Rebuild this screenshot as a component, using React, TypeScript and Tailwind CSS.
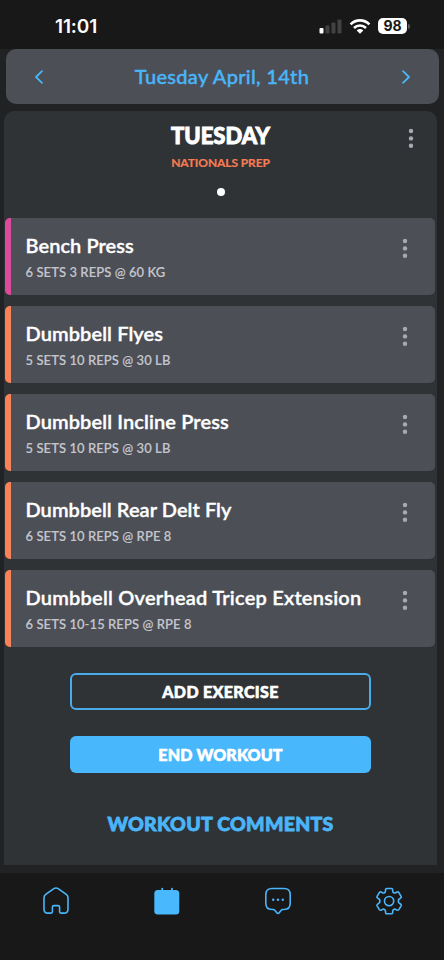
import type { ReactNode } from "react";

type Exercise = {
  name: string;
  detail: string;
  bar: string;
  spacing: string;
};

const exercises: Exercise[] = [
  { name: "Bench Press", detail: "6 SETS 3 REPS @ 60 KG", bar: "bg-[#dc4a9c]", spacing: "tracking-[0.06px]" },
  { name: "Dumbbell Flyes", detail: "5 SETS 10 REPS @ 30 LB", bar: "bg-[#f98359]", spacing: "tracking-[0.1px]" },
  { name: "Dumbbell Incline Press", detail: "5 SETS 10 REPS @ 30 LB", bar: "bg-[#f98359]", spacing: "tracking-[0.11px]" },
  { name: "Dumbbell Rear Delt Fly", detail: "6 SETS 10 REPS @ RPE 8", bar: "bg-[#f98359]", spacing: "tracking-[0.06px]" },
  { name: "Dumbbell Overhead Tricep Extension", detail: "6 SETS 10-15 REPS @ RPE 8", bar: "bg-[#f98359]", spacing: "tracking-[0.23px]" },
];

function Dots() {
  return (
    <button className="block" aria-label="More options">
      <svg width="20" height="21" viewBox="0 0 20 21" fill="#a8aab1">
        <circle cx="10" cy="3" r="2.2" />
        <circle cx="10" cy="10.4" r="2.2" />
        <circle cx="10" cy="17.8" r="2.2" />
      </svg>
    </button>
  );
}

function StatusBar() {
  return (
    <div className="flex h-[49px] items-start justify-between bg-[#181818] pl-[55px] pr-[34px] pt-[15px] font-['Inter',sans-serif] text-white">
      <span className="text-[19px] font-semibold leading-[24px] tracking-[-0.1px]">11:01</span>
      <div className="flex items-center pt-[3px]">
        <svg width="24" height="15" viewBox="0 0 24 15">
          <rect x="0.5" y="9" width="4" height="5.5" rx="1" fill="#fff" />
          <rect x="6.5" y="6.5" width="4" height="8" rx="1" fill="#424242" />
          <rect x="12.5" y="3.5" width="4" height="11" rx="1" fill="#424242" />
          <rect x="18.5" y="0.5" width="4" height="14" rx="1" fill="#424242" />
        </svg>
        <svg className="ml-[6px]" width="22" height="15" viewBox="0 0 22 15" fill="none" stroke="#fff" strokeWidth="2.6">
          <path d="M1.6 5.3a13.3 13.3 0 0 1 18.8 0" />
          <path d="M5 9a8.5 8.5 0 0 1 12 0" />
          <path d="M11 14.7l-3.3-3.3a4.7 4.7 0 0 1 6.6 0z" fill="#fff" stroke="none" />
        </svg>
        <div className="ml-[7px] flex h-4 w-[29px] items-center justify-center rounded-[5px] bg-white text-[14px] font-bold leading-none text-[#181818]">
          98
        </div>
        <span className="ml-px h-[5px] w-[2px] rounded-r-full bg-[#5a5a5a]" />
      </div>
    </div>
  );
}

function ExerciseCard({ exercise }: { exercise: Exercise }) {
  return (
    <div className="flex h-[77px] overflow-hidden rounded-[5px] bg-[#4c4f56]">
      <span className={`w-[6px] shrink-0 ${exercise.bar}`} />
      <div className="flex-1 whitespace-nowrap pl-[14.5px] pt-[15px]">
        <h3 className={`text-[20px] font-semibold leading-[25px] text-white [-webkit-text-stroke:0.35px] ${exercise.spacing}`}>
          {exercise.name}
        </h3>
        <p className="mt-[5px] text-[13px] font-semibold leading-[18px] tracking-[0.07px] text-[#c3c5cc] [-webkit-text-stroke:0.1px]">
          {exercise.detail}
        </p>
      </div>
      <div className="mr-5 pt-[20px]">
        <Dots />
      </div>
    </div>
  );
}

function NavItem({ label, children }: { label: string; children: ReactNode }) {
  return (
    <button className="flex flex-1 items-start justify-center pt-[12px] text-[#4ab5f9]" aria-label={label}>
      {children}
    </button>
  );
}

export default function App() {
  return (
    <div className="flex h-[960px] w-[444px] flex-col bg-[#202224] font-['Lato',sans-serif]">
      <StatusBar />

      <header className="ml-[5.5px] flex h-[55px] w-[433px] items-center justify-between rounded-[10px] bg-[#4c4f55] px-[27px] text-[#4ab5f9]">
        <svg width="12" height="16" viewBox="0 0 12 16" fill="none" stroke="currentColor" strokeWidth="1.8" strokeLinecap="round" strokeLinejoin="round">
          <path d="M9 2.2 3 8l6 5.8" />
        </svg>
        <h1 className="pb-[2px] text-[20px] font-medium leading-[24px] tracking-[0.3px] [-webkit-text-stroke:0.4px]">Tuesday April, 14th</h1>
        <svg width="12" height="16" viewBox="0 0 12 16" fill="none" stroke="currentColor" strokeWidth="1.8" strokeLinecap="round" strokeLinejoin="round">
          <path d="m3 2.2 6 5.8-6 5.8" />
        </svg>
      </header>

      <main className="ml-[4px] mt-[7px] h-[754px] w-[433px] rounded-t-[10px] bg-[#303336] px-px">
        <div className="relative flex h-[107px] flex-col items-center pt-[12px]">
          <h2 className="text-[22px] font-black leading-[26px] text-white [-webkit-text-stroke:0.9px]">TUESDAY</h2>
          <p className="mt-[7px] text-[12px] font-bold leading-[14px] tracking-[-0.1px] text-[#f57c54] [-webkit-text-stroke:0.2px]">NATIONALS PREP</p>
          <span className="mt-[18px] size-[8px] rounded-full bg-white" />
          <div className="absolute right-[15px] top-[17px]">
            <Dots />
          </div>
        </div>

        <div className="flex w-[430px] flex-col gap-[11px]">
          {exercises.map((exercise) => (
            <ExerciseCard key={exercise.name} exercise={exercise} />
          ))}
        </div>

        <div className="flex flex-col items-center pt-[26px]">
          <button className="h-[37px] w-[301px] rounded-[6px] border-2 border-[#4aabe8] text-[16px] font-black tracking-[0.35px] text-white [-webkit-text-stroke:0.6px]">ADD EXERCISE</button>
          <button className="mt-[26px] h-[37px] w-[301px] rounded-[6px] bg-[#49b7fc] text-[16px] font-black tracking-[0.15px] text-white [-webkit-text-stroke:0.6px]">END WORKOUT</button>
          <h2 className="mt-[38px] text-[19.5px] font-black leading-[26px] tracking-[0.25px] text-[#4ab5f9] [-webkit-text-stroke:0.8px]">WORKOUT COMMENTS</h2>
        </div>
      </main>

      <nav className="mt-[8px] flex h-[87px] bg-[#181819]">
        <NavItem label="Home">
          <svg width="30" height="32" viewBox="0 0 30 32" fill="none" stroke="currentColor" strokeWidth="1.6" strokeLinejoin="round">
            <path d="M3 12.6c0-1.3.6-2.5 1.700-3.300l7.800-5.500c1.500-1 3.500-1 5 0l7.800 5.500c1.100.8 1.700 2 1.700 3.300v11.600c0 2.400-1.700 3.900-3.900 3.900h-3.200c-.8 0-1.300-.5-1.300-1.300v-4.600c0-1-.6-1.600-1.600-1.600h-4c-1 0-1.600.6-1.600 1.600v4.600c0 .8-.5 1.300-1.300 1.300H6.900C4.700 28.100 3 26.600 3 24.200z" />
          </svg>
        </NavItem>
        <NavItem label="Workouts">
          <svg width="30" height="32" viewBox="0 0 30 32" fill="#49b8fc">
            <rect x="2.3" y="5" width="25" height="24.5" rx="3.5" />
            <rect x="9.3" y="2.8" width="1.8" height="4" rx="0.9" />
            <rect x="19" y="2.8" width="1.8" height="4" rx="0.9" />
          </svg>
        </NavItem>
        <NavItem label="Messages">
          <svg width="30" height="32" viewBox="0 0 30 32" fill="none" stroke="currentColor" strokeWidth="1.6" strokeLinejoin="round">
            <path d="M9 3.5h12c4 0 6.2 2.2 6.2 6.2v8.600c0 4-2.200 6.200-6.200 6.200h-1.200c-.8 0-1.300.3-1.800.9l-1.800 2.300c-.7.9-1.700.9-2.400 0L12 25.400c-.5-.6-1-.9-1.800-.9H9c-4 0-6.200-2.200-6.200-6.200V9.700c0-4 2.200-6.200 6.200-6.200z" />
            <g fill="currentColor" stroke="none">
              <circle cx="10.2" cy="14.7" r="1.2" />
              <circle cx="15" cy="14.7" r="1.2" />
              <circle cx="19.8" cy="14.7" r="1.2" />
            </g>
          </svg>
        </NavItem>
        <NavItem label="Settings">
          <svg width="30" height="32" viewBox="-14.7 -15.7 29.2 31.2" fill="none" stroke="currentColor" strokeWidth="1.600" strokeLinejoin="round">
            <path d="M-2.400-12.300h4.800q1 0 1 1l.2 1.900q.1.900.9 1.300q.8.400 1.500.1l1.700-.8q1.200-.4 1.800.5l2.200 3.700q.5.900-.3 1.500l-1.500 1.100q-.8.500-.8 1.200v1.600q0 .7.800 1.200l1.500 1.100q.8.600.3 1.500l-2.200 3.700q-.6.900-1.800.5l-1.700-.8q-.7-.3-1.500.1q-.8.400-.9 1.300l-.2 1.900q0 1-1 1h-4.800q-1 0-1-1l-.2-1.900q-.1-.9-.9-1.300q-.8-.4-1.500-.1l-1.700.8q-1.200.4-1.800-.5l-2.200-3.700q-.5-.9.300-1.500l1.500-1.100q.8-.5.8-1.200v-1.600q0-.7-.8-1.200l-1.500-1.100q-.8-.6-.3-1.500l2.200-3.700q.6-.9 1.800-.5l1.700.8q.7.300 1.500-.1q.8-.4.900-1.300l.2-1.900q0-1 1-1z" />
            <circle r="4.5" />
          </svg>
        </NavItem>
      </nav>
    </div>
  );
}
